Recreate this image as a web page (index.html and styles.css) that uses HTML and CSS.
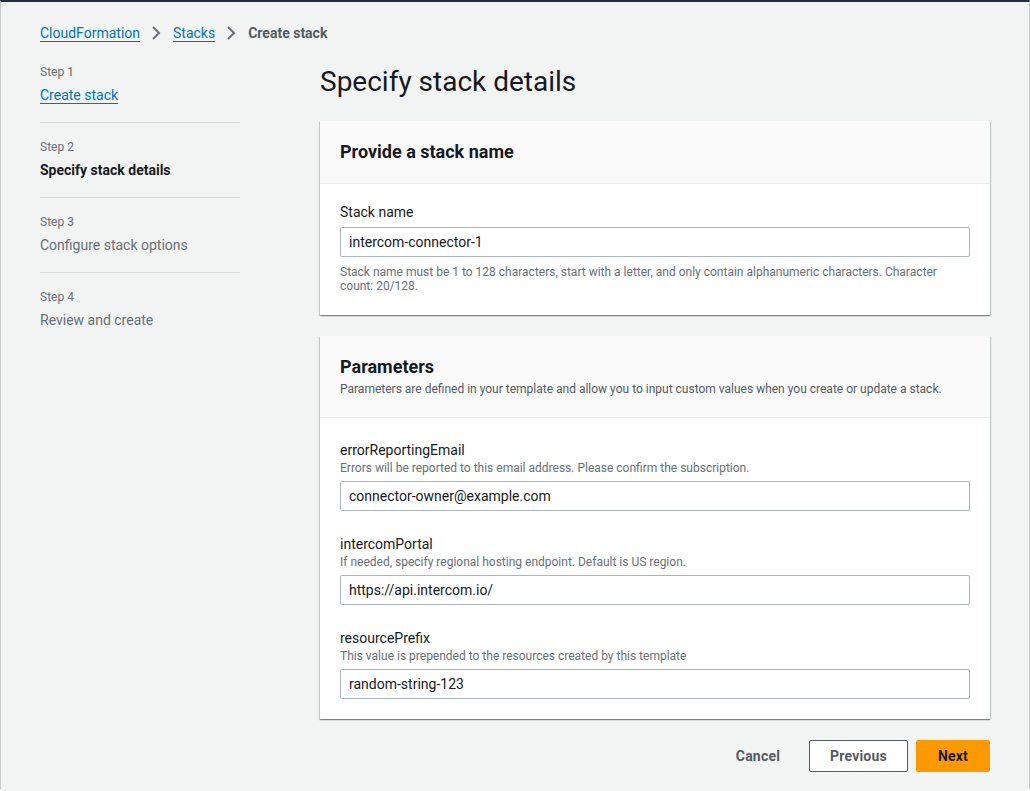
FILE: index.html
```html
<!DOCTYPE html>
<html lang="en">
<head>
    <meta charset="UTF-8">
    <meta name="viewport" content="width=device-width, initial-scale=1.0">
    <title>Specify stack details</title>
    <link rel="stylesheet" href="styles.css">
</head>
<body>
    <div class="page">
        <nav class="breadcrumbs">
            <a href="#">CloudFormation</a>
            <svg class="chevron" width="16" height="16" viewBox="0 0 16 16"><path d="M5 2l6 6-6 6" /></svg>
            <a href="#">Stacks</a>
            <svg class="chevron" width="16" height="16" viewBox="0 0 16 16"><path d="M5 2l6 6-6 6" /></svg>
            <span class="current">Create stack</span>
        </nav>

        <div class="layout">
            <ul class="steps">
                <li class="step">
                    <div class="step-num">Step 1</div>
                    <a href="#" class="step-title link">Create stack</a>
                </li>
                <li class="step">
                    <div class="step-num">Step 2</div>
                    <div class="step-title active">Specify stack details</div>
                </li>
                <li class="step">
                    <div class="step-num">Step 3</div>
                    <div class="step-title">Configure stack options</div>
                </li>
                <li class="step">
                    <div class="step-num">Step 4</div>
                    <div class="step-title">Review and create</div>
                </li>
            </ul>

            <main class="content">
                <h1>Specify stack details</h1>

                <section class="card">
                    <div class="card-header">
                        <h2>Provide a stack name</h2>
                    </div>
                    <div class="card-body">
                        <label class="field-label" for="stack-name">Stack name</label>
                        <input class="input" id="stack-name" type="text" value="intercom-connector-1">
                        <p class="constraint">Stack name must be 1 to 128 characters, start with a letter, and only contain alphanumeric characters. Character count: 20/128.</p>
                    </div>
                </section>

                <section class="card">
                    <div class="card-header">
                        <h2>Parameters</h2>
                        <p class="card-desc">Parameters are defined in your template and allow you to input custom values when you create or update a stack.</p>
                    </div>
                    <div class="card-body params">
                        <div class="field">
                            <label class="field-label" for="email">errorReportingEmail</label>
                            <div class="field-desc">Errors will be reported to this email address. Please confirm the subscription.</div>
                            <input class="input" id="email" type="text" value="connector-owner@example.com">
                        </div>
                        <div class="field">
                            <label class="field-label" for="portal">intercomPortal</label>
                            <div class="field-desc">If needed, specify regional hosting endpoint. Default is US region.</div>
                            <input class="input" id="portal" type="text" value="https://api.intercom.io/">
                        </div>
                        <div class="field">
                            <label class="field-label" for="prefix">resourcePrefix</label>
                            <div class="field-desc">This value is prepended to the resources created by this template</div>
                            <input class="input" id="prefix" type="text" value="random-string-123">
                        </div>
                    </div>
                </section>

                <div class="actions">
                    <button class="btn btn-link">Cancel</button>
                    <button class="btn btn-normal">Previous</button>
                    <button class="btn btn-primary">Next</button>
                </div>
            </main>
        </div>
    </div>
</body>
</html>
```

FILE: styles.css
```css
html, body {
    margin: 0;
    padding: 0;
}

body {
    background-color: #f2f3f3;
    font-family: Roboto, 'Liberation Sans', Arial, sans-serif;
    font-size: 14px;
    line-height: 20px;
    color: #16191f;
}

.page {
    min-height: 789px;
    border-top: 2px solid #232f3e;
    border-left: 1px solid #c6cccc;
    border-right: 1px solid #c6cccc;
    padding: 21px 38px 0 39px;
    box-sizing: border-box;
}

a {
    color: #0073bb;
    text-decoration: underline;
    text-underline-offset: 3px;
}

/* breadcrumbs */
.breadcrumbs {
    display: flex;
    align-items: center;
    height: 20px;
    margin-bottom: 21px;
}

.chevron {
    margin: 0 9px 0 8px;
    fill: none;
    stroke: #687078;
    stroke-width: 2;
}

.current {
    color: #545b64;
    font-weight: 700;
}

/* layout */
.layout {
    display: grid;
    grid-template-columns: 200px 670px;
    column-gap: 80px;
}

/* wizard steps */
.steps {
    list-style: none;
    margin: 0;
    padding: 0;
}

.step {
    padding: 16px 0;
    border-bottom: 1px solid #d5dbdb;
}

.step:first-child {
    padding-top: 0;
}

.step:last-child {
    border-bottom: none;
}

.step-num {
    font-size: 12px;
    line-height: 16px;
    color: #687078;
}

.step-title {
    display: block;
    margin-top: 4px;
    line-height: 22px;
    color: #687078;
}

.step-title.link {
    display: inline-block;
    color: #0073bb;
}

.step-title.active {
    color: #16191f;
    font-weight: 700;
}

/* main */
h1 {
    margin: 0 0 21px;
    font-size: 28px;
    line-height: 36px;
    font-weight: 400;
    color: #16191f;
}

.card {
    background-color: #fff;
    margin-bottom: 21px;
    box-shadow: 0 1px 1px 0 rgba(0, 28, 36, 0.3), 1px 1px 1px 0 rgba(0, 28, 36, 0.15), -1px 1px 1px 0 rgba(0, 28, 36, 0.15);
}

.card-header {
    background-color: #fafafa;
    border-bottom: 1px solid #eaeded;
    padding: 20px;
}

.card-header h2 {
    margin: 0;
    font-size: 18px;
    line-height: 22px;
    font-weight: 700;
}

.card-desc {
    margin: 3px 0 0;
    font-size: 12px;
    line-height: 16px;
    color: #545b64;
}

.card-body {
    padding: 18px 20px 22px;
}

.card-body.params {
    padding: 22px 20px 20px;
}

.field + .field {
    margin-top: 23px;
}

.field-label {
    display: block;
    line-height: 20px;
    color: #16191f;
    margin-bottom: 5px;
}

.field .field-label {
    margin-bottom: 0;
}

.field-desc {
    font-size: 12px;
    line-height: 16px;
    color: #687078;
    margin-bottom: 5px;
}

.input {
    display: block;
    width: 100%;
    box-sizing: border-box;
    height: 30px;
    padding: 4px 8px;
    border: 1px solid #aab7b8;
    border-radius: 2px;
    font-family: inherit;
    font-size: 14px;
    color: #16191f;
    background-color: #fff;
}

.constraint {
    margin: 8px 0 0;
    font-size: 12px;
    line-height: 14px;
    color: #687078;
}

/* actions */
.actions {
    display: flex;
    justify-content: flex-end;
    gap: 8px;
}

.btn {
    font-family: inherit;
    font-size: 14px;
    line-height: 22px;
    font-weight: 700;
    padding: 4px 20px;
    border: 1px solid transparent;
    border-radius: 2px;
    cursor: pointer;
    letter-spacing: 0.2px;
}

.btn-link {
    background: transparent;
    color: #545b64;
}

.btn-normal {
    background-color: #fff;
    border-color: #545b64;
    color: #545b64;
}

.btn-primary {
    background-color: #ff9900;
    border-color: #ff9900;
    color: #16191f;
    padding: 4px 21px;
}
```
